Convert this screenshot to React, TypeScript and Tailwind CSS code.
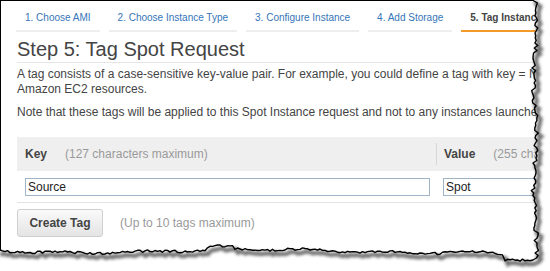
import React from "react";

function mulberry32(a: number) {
  return function () {
    let t = (a += 0x6d2b79f5);
    t = Math.imul(t ^ (t >>> 15), t | 1);
    t ^= t + Math.imul(t ^ (t >>> 7), t | 61);
    return ((t ^ (t >>> 14)) >>> 0) / 4294967296;
  };
}

function tornPath() {
  const r = mulberry32(7);
  const right: [number, number][] = [];
  for (let y = -2; y <= 258; y += 2.5) {
    const x = 535 + Math.sin(y / 17) * 1.5 + (r() - 0.5) * 4.5;
    right.push([x, y]);
  }
  right.push([533, 260]);
  const bottom: [number, number][] = [];
  for (let x = 530; x >= -3; x -= 2.5) {
    let base = 251 + Math.sin(x / 55) * 1.8 + Math.sin(x / 13) * 0.8;
    if (x > 503) base = 260;
    else if (x > 495) base = 254;
    if (x > 205 && x < 235) base -= 3;
    const y = base + (r() - 0.5) * 2.5;
    bottom.push([x, y]);
  }
  return [...right, ...bottom];
}

export default function App() {
  const pts = tornPath();
  const line = pts.map((p, i) => `${i === 0 ? "M" : "L"}${p[0].toFixed(1)},${p[1].toFixed(1)}`).join(" ");
  const outside = `${line} L-5,280 L560,280 L560,-5 Z`;

  const tabs = [
    "1. Choose AMI",
    "2. Choose Instance Type",
    "3. Configure Instance",
    "4. Add Storage",
  ];

  return (
    <div className="relative w-[550px] h-[271px] overflow-hidden bg-white [font-family:'Liberation_Sans',Arial,sans-serif]">
      <div className="h-full border-l border-t border-black pl-[15px] text-[#444]">
        {/* tabs */}
        <div className="flex gap-[9px] pt-[11px] whitespace-nowrap">
          {tabs.map((t) => (
            <div key={t} className="shrink-0 px-[9px] pb-[6px] border-b-2 border-[#eeeeee] text-[10px] leading-[12px] text-[#3575b8]">
              {t}
            </div>
          ))}
          <div className="shrink-0 px-[9px] pb-[6px] border-b-2 border-[#f39a2b] text-[10px] leading-[12px] font-bold text-[#444] w-[90px]">
            5. Tag Instance
          </div>
        </div>
        {/* heading */}
        <div className="ml-[1px] mt-[6px] border-b border-[#e6e6e6] pb-[2px] text-[20px] leading-[22px] text-[#444]">
          Step 5: Tag Spot Request
        </div>
        <div className="ml-[1px] mt-[4px] text-[12px] leading-[15px] text-[#444] whitespace-nowrap">
          <p>A tag consists of a case-sensitive key-value pair. For example, you could define a tag with key = Name</p>
          <p>Amazon EC2 resources.</p>
          <p className="mt-[8px]">Note that these tags will be applied to this Spot Instance request and not to any instances launched</p>
        </div>
        {/* table */}
        <div className="ml-[1px] mt-[17px]">
          <div className="flex items-center h-[34px] bg-[#efefef] text-[12px] whitespace-nowrap">
            <div className="shrink-0 w-[419px] flex items-center pl-[8px]">
              <span className="font-bold text-[#444]">Key</span>
              <span className="ml-[18px] text-[#9a9a9a]">(127 characters maximum)</span>
            </div>
            <div className="shrink-0 h-[22px] border-l border-[#d8d8d8] flex items-center pl-[7px]">
              <span className="font-bold text-[#444]">Value</span>
              <span className="ml-[18px] text-[#9a9a9a]">(255 characters maximum)</span>
            </div>
          </div>
          <div className="flex h-[32px] items-center border-b border-[#e4e4e4] pl-[8px]">
            <div className="shrink-0 w-[405px] h-[18px] border border-[#9fb4c7] flex items-center pl-[2px] text-[12px] text-[#222]">
              Source
            </div>
            <div className="shrink-0 ml-[13px] w-[200px] h-[18px] border border-[#9fb4c7] flex items-center pl-[2px] text-[12px] text-[#222]">
              Spot
            </div>
          </div>
          <div className="flex items-center mt-[6px]">
            <div className="shrink-0 w-[86px] h-[28px] rounded-[3px] border border-[#cfcfcf] bg-gradient-to-b from-[#fafafa] to-[#e4e4e4] flex items-center justify-center text-[12px] font-bold text-[#444]">
              Create Tag
            </div>
            <span className="ml-[17px] text-[12px] text-[#9a9a9a]">(Up to 10 tags maximum)</span>
          </div>
        </div>
      </div>
      <svg className="absolute inset-0" width="550" height="271" viewBox="0 0 550 271">
        <defs>
          <filter id="blur" x="-10%" y="-10%" width="120%" height="120%">
            <feGaussianBlur stdDeviation="1.6" />
          </filter>
        </defs>
        <path d={outside} fill="#ffffff" />
        <path d={line} transform="translate(3,3.5)" fill="none" stroke="#555" strokeWidth="4" filter="url(#blur)" opacity="0.85" />
        <path d={line} fill="none" stroke="#000" strokeWidth="1.4" strokeLinejoin="round" />
      </svg>
    </div>
  );
}
